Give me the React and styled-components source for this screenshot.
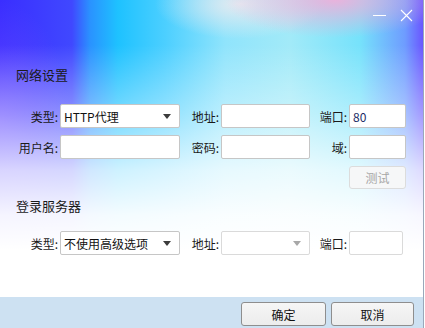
import React from "react";
import styled, { createGlobalStyle } from "styled-components";

const Global = createGlobalStyle`
  html, body { margin: 0; padding: 0; background: #fff; }
  body { font-family: "Noto Sans CJK SC", "Noto Sans", sans-serif; }
`;

const Window = styled.div`
  width: 423px;
  height: 328px;
  border-right: 1px solid #9aa8ba;
  display: flex;
  flex-direction: column;
  background:
    linear-gradient(180deg, rgba(255,255,255,0) 0px, rgba(255,255,255,0) 45px, rgba(255,255,255,0.4) 115px, rgba(255,255,255,0.78) 170px, rgba(255,255,255,0.95) 215px, #fff 250px),
    radial-gradient(ellipse 110px 38px at 335px 0px, rgba(238,176,218,0.95), rgba(238,176,218,0)),
    radial-gradient(ellipse 85px 35px at 240px 4px, rgba(232,234,240,0.95), rgba(232,234,240,0)),
    radial-gradient(ellipse 70px 120px at 0px 120px, rgba(110,80,255,0.7), rgba(110,80,255,0)),
    linear-gradient(90deg, #3a2eff 0px, #4048ff 72px, #2a92ff 90px, #1ec2ff 118px, #4ccfff 165px, #90e4fc 225px, #a2eaf8 290px, #76e2fb 360px, #6e9cff 405px, #6a56ff 423px);
`;

const TitleBar = styled.div`
  height: 30px;
  display: flex;
  justify-content: flex-end;
  align-items: flex-start;
  padding-right: 10px;
  gap: 14px;
`;

const WinBtn = styled.svg`
  margin-top: 9px;
  display: block;
`;

const Body = styled.div`
  flex: 1;
  display: flex;
  flex-direction: column;
`;

const SectionTitle = styled.div`
  font-size: 13px;
  line-height: 18px;
  color: #1a1a1a;
  padding-left: 16px;
  margin-top: ${(p) => p.$top}px;
`;

const Grid = styled.div`
  display: grid;
  grid-template-columns: 46px 120px 37px 89px 35px 57px;
  column-gap: 2px;
  row-gap: 7px;
  padding-left: 12px;
  margin-top: ${(p) => p.$top}px;
  grid-auto-rows: 24px;
`;

const Label = styled.div`
  font-size: 12px;
  color: #1a1a1a;
  display: flex;
  align-items: center;
  justify-content: flex-end;
  white-space: nowrap;
`;

const Field = styled.div`
  box-sizing: border-box;
  height: ${(p) => p.$h || 24}px;
  width: ${(p) => (p.$w ? p.$w + "px" : "auto")};
  background: #fff;
  border: 1px solid ${(p) => (p.$dim ? "#dadada" : "#c6c6c6")};
  border-radius: 2px;
  display: flex;
  align-items: center;
  padding: 0 4px 0 3px;
  font-size: 12px;
  color: ${(p) => p.$color || "#111"};
`;

const Arrow = styled.span`
  margin-left: auto;
  margin-right: 4px;
  width: 0;
  height: 0;
  border-left: 4.5px solid transparent;
  border-right: 4.5px solid transparent;
  border-top: 5px solid ${(p) => (p.$dim ? "#a8a8a8" : "#3c3c3c")};
`;

const TestBtn = styled.div`
  grid-column: 6;
  box-sizing: border-box;
  height: 23px;
  border: 1px solid #dcdcdc;
  border-radius: 3px;
  background: #f6f7f8;
  color: #a6a6a6;
  font-size: 12px;
  display: flex;
  align-items: center;
  justify-content: center;
`;

const Footer = styled.div`
  height: 31px;
  background: #cde1f2;
  display: flex;
  justify-content: flex-end;
  align-items: flex-start;
  padding-right: 9px;
  gap: 5px;
`;

const FootBtn = styled.div`
  box-sizing: border-box;
  margin-top: 5px;
  width: ${(p) => p.$w}px;
  height: 24px;
  border: 1px solid #8e8e8e;
  border-radius: 3px;
  background: linear-gradient(#f6f6f6, #ececec);
  font-size: 12px;
  color: #111;
  display: flex;
  align-items: center;
  justify-content: center;
`;

const Combo = ({ text, dim, w }) => (
  <Field $dim={dim} $w={w}>
    {text}
    <Arrow $dim={dim} />
  </Field>
);

export default function App() {
  return (
    <>
      <Global />
      <Window>
        <TitleBar>
          <WinBtn width="13" height="13" viewBox="0 0 13 13">
            <line x1="0" y1="6.5" x2="13" y2="6.5" stroke="#fff" strokeWidth="1" />
          </WinBtn>
          <WinBtn width="13" height="13" viewBox="0 0 13 13">
            <path d="M1 1 L12 12 M12 1 L1 12" stroke="#fff" strokeWidth="1.1" fill="none" />
          </WinBtn>
        </TitleBar>
        <Body>
          <SectionTitle $top={36}>网络设置</SectionTitle>
          <Grid $top={20}>
            <Label>类型:</Label>
            <Combo text="HTTP代理" />
            <Label>地址:</Label>
            <Field />
            <Label>端口:</Label>
            <Field $color="#1b2c66">80</Field>
            <Label>用户名:</Label>
            <Field />
            <Label>密码:</Label>
            <Field />
            <Label>域:</Label>
            <Field />
            <TestBtn>测试</TestBtn>
          </Grid>
          <SectionTitle $top={7}>登录服务器</SectionTitle>
          <Grid $top={16}>
            <Label>类型:</Label>
            <Combo text="不使用高级选项" />
            <Label>地址:</Label>
            <Combo text="" dim />
            <Label>端口:</Label>
            <Field $w={54} $dim />
          </Grid>
        </Body>
        <Footer>
          <FootBtn $w={85}>确定</FootBtn>
          <FootBtn $w={83}>取消</FootBtn>
        </Footer>
      </Window>
    </>
  );
}
